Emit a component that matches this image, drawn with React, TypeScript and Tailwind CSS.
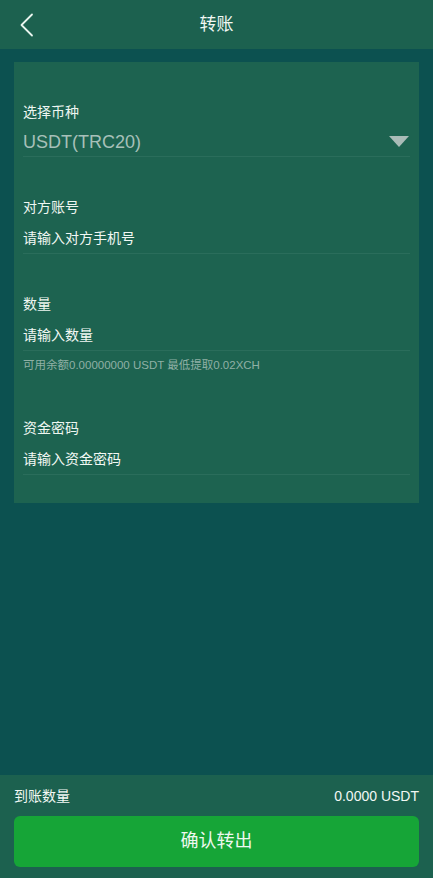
const FONT = { fontFamily: '"Liberation Sans", "Noto Sans CJK SC", sans-serif' }

function Field({ label, placeholder }: { label: string; placeholder: string }) {
  return (
    <div className="flex flex-col">
      <p className="text-[14px] leading-[18px] text-[#eef6f1]">{label}</p>
      <div className="mt-[13px] h-[25px] border-b border-[#2a6d5b] flex items-start">
        <span className="text-[14px] leading-[18px] text-[#f2f8f4]">{placeholder}</span>
      </div>
    </div>
  )
}

export default function App() {
  return (
    <div className="w-[433px] h-[878px] bg-[#0c5150] flex flex-col" style={FONT}>
      {/* Header */}
      <div className="h-[49px] bg-[#1c614f] flex items-center relative shrink-0">
        <svg width="16" height="24" viewBox="0 0 16 24" className="ml-[19px]">
          <polyline points="13,1.5 2.5,12 13,22.5" fill="none" stroke="#e9f5ef" strokeWidth="1.8" strokeLinecap="round" strokeLinejoin="round" />
        </svg>
        <h1 className="absolute left-0 right-0 text-center text-[17px] text-[#f2f8f4] pointer-events-none">
          转账
        </h1>
      </div>

      {/* Form card */}
      <div className="mx-[14px] mt-[13px] bg-[#1d6350] px-[9px] pt-[41px] pb-[28px] flex flex-col">
        <div className="flex flex-col">
          <p className="text-[14px] leading-[18px] text-[#eef6f1]">选择币种</p>
          <div className="mt-[10px] h-[26px] border-b border-[#2a6d5b] flex items-start justify-between">
            <span className="text-[18px] leading-[22px] text-[#a7c0b9]">USDT(TRC20)</span>
            <svg width="20" height="11" viewBox="0 0 20 11" className="mt-[5px] mr-[1px]">
              <polygon points="0,0 20,0 10,11" fill="#a9bcb7" />
            </svg>
          </div>
        </div>

        <div className="mt-[41px]">
          <Field label="对方账号" placeholder="请输入对方手机号" />
        </div>

        <div className="mt-[41px]">
          <Field label="数量" placeholder="请输入数量" />
          <p className="mt-[7px] text-[11.5px] leading-[14px] text-[#8fb0a5]">
            可用余额0.00000000 USDT 最低提取0.02XCH
          </p>
        </div>

        <div className="mt-[47px]">
          <Field label="资金密码" placeholder="请输入资金密码" />
        </div>
      </div>

      <div className="flex-1" />

      {/* Bottom bar */}
      <div className="bg-[#1c614f] px-[14px] pt-[12px] pb-[11px] flex flex-col shrink-0">
        <div className="flex items-center justify-between h-[18px]">
          <span className="text-[14px] text-[#f2f8f4]">到账数量</span>
          <span className="text-[14px] text-[#f2f8f4]">0.0000 USDT</span>
        </div>
        <button className="mt-[11px] h-[51px] rounded-[6px] bg-[#16a537] text-[18px] text-[#eef8f0]">
          确认转出
        </button>
      </div>
    </div>
  )
}
